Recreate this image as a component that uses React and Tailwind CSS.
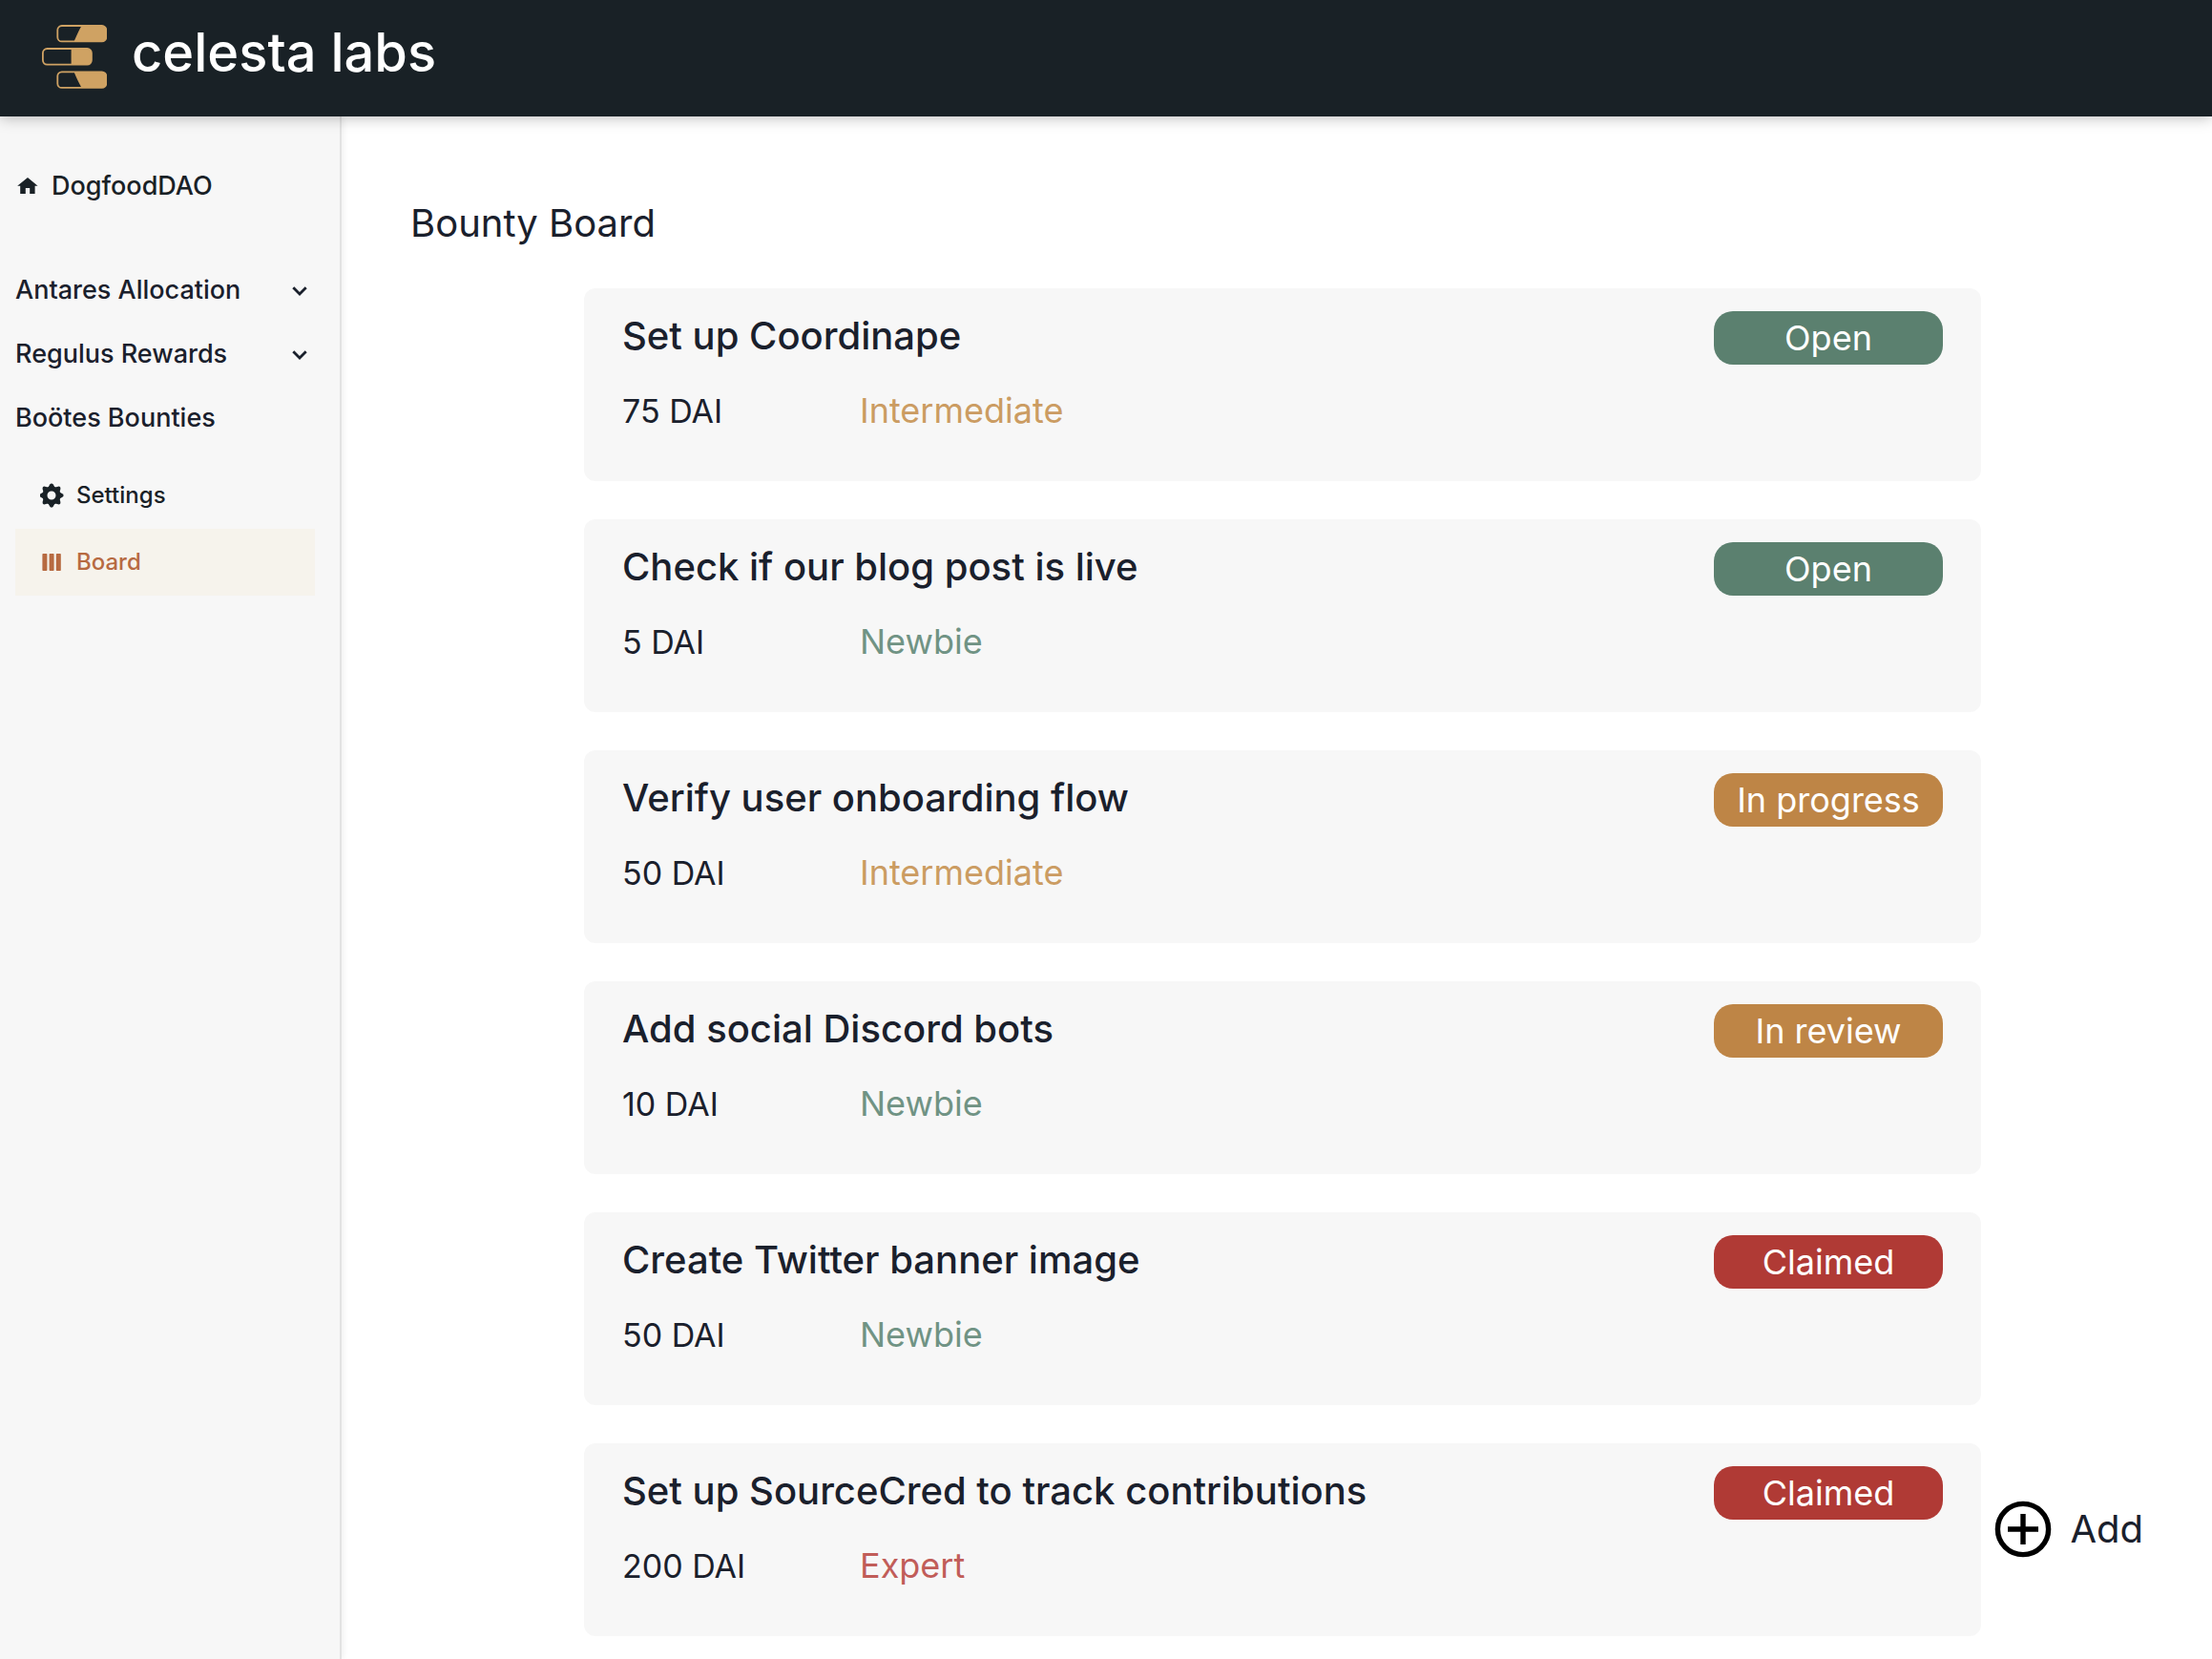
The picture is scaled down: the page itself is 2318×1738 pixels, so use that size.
import React from 'react';
import clsx from 'clsx';

const bounties = [
  { title: 'Set up Coordinape', reward: '75 DAI', level: 'Intermediate', status: 'Open' },
  { title: 'Check if our blog post is live', reward: '5 DAI', level: 'Newbie', status: 'Open' },
  { title: 'Verify user onboarding flow', reward: '50 DAI', level: 'Intermediate', status: 'In progress' },
  { title: 'Add social Discord bots', reward: '10 DAI', level: 'Newbie', status: 'In review' },
  { title: 'Create Twitter banner image', reward: '50 DAI', level: 'Newbie', status: 'Claimed' },
  { title: 'Set up SourceCred to track contributions', reward: '200 DAI', level: 'Expert', status: 'Claimed' },
];

const statusColors = {
  Open: 'bg-[#5b806f]',
  'In progress': 'bg-[#be8546]',
  'In review': 'bg-[#be8546]',
  Claimed: 'bg-[#b03a35]',
};

const levelColors = {
  Newbie: 'text-[#709384]',
  Intermediate: 'text-[#cb9c62]',
  Expert: 'text-[#c15d59]',
};

function Logo() {
  return (
    <svg width="68" height="72" viewBox="0 0 68 72" fill="none" stroke="#cfa263" strokeWidth="1.8">
      <rect x="16.3" y="3" width="51" height="16.4" rx="4.5" />
      <path d="M41.5 3H63a4.5 4.5 0 0 1 4.5 4.5v7.4a4.5 4.5 0 0 1-4.5 4.5H33.5C36 14 38 9 41.5 3Z" fill="#cfa263" stroke="none" />
      <rect x="0.9" y="27" width="51" height="16.6" rx="4.5" />
      <path d="M30.6 27H47.5a4.5 4.5 0 0 1 4.5 4.5v7.6a4.5 4.5 0 0 1-4.5 4.5H30.6Z" fill="#cfa263" stroke="none" />
      <rect x="16.3" y="51.3" width="51" height="16.6" rx="4.5" />
      <path d="M33.5 51.3H63a4.5 4.5 0 0 1 4.5 4.5v7.6a4.5 4.5 0 0 1-4.5 4.5H41.5C38 62 36 57 33.5 51.3Z" fill="#cfa263" stroke="none" />
    </svg>
  );
}

function HomeIcon() {
  return (
    <svg width="24" height="24" viewBox="0 0 24 24" fill="currentColor">
      <path d="M13 3 23.6 11.8H20.6V20H15.2V14H10.8V20H5.2V11.8H2.2Z" />
    </svg>
  );
}

function ChevronIcon() {
  return (
    <svg width="24" height="24" viewBox="0 0 24 24" fill="none" stroke="currentColor" strokeWidth="2.8">
      <path d="m5.3 8.2 6.7 6.7 6.7-6.7" />
    </svg>
  );
}

function GearIcon() {
  return (
    <svg width="26" height="26" viewBox="0 0 26 26" fill="currentColor">
      <circle cx="12" cy="13" r="7" fill="none" stroke="currentColor" strokeWidth="5" />
      {[0, 45, 90, 135, 180, 225, 270, 315].map((angle) => (
        <path
          key={angle}
          d="M8.2 5 10.2 1.6Q12 -0.8 13.8 1.6L15.8 5Z"
          transform={`rotate(${angle} 12 13)`}
        />
      ))}
    </svg>
  );
}

function BoardIcon() {
  return (
    <svg width="26" height="26" viewBox="0 0 26 26" fill="currentColor">
      <rect x="2.4" y="4" width="5" height="18" rx="0.8" />
      <rect x="9.6" y="4" width="5" height="18" rx="0.8" />
      <rect x="16.8" y="4" width="5" height="18" rx="0.8" />
    </svg>
  );
}

function PlusIcon() {
  return (
    <svg width="60" height="60" viewBox="0 0 60 60" fill="none" stroke="#000" strokeWidth="5.4">
      <circle cx="30" cy="30" r="26.6" />
      <path d="M30 14V46M14 30H46" />
    </svg>
  );
}

function SectionButton({ label }) {
  return (
    <button className="flex h-[67px] w-full items-center justify-between text-left">
      {label}
      <ChevronIcon />
    </button>
  );
}

function Sidebar() {
  return (
    <nav className="w-[358px] shrink-0 border-r-2 border-[#e3e3e3] bg-[#f7f7f7] pl-4 pr-[26px] pt-[46px] text-[27px] font-medium text-[#1a202c] shadow-[2px_0_6px_rgba(0,0,0,0.06)]">
      <a href="#home" className="flex h-[54px] items-center gap-[14px] text-[#192126]">
        <HomeIcon />
        DogfoodDAO
      </a>
      <div className="pr-1 pt-[49px]">
        <SectionButton label="Antares Allocation" />
        <SectionButton label="Regulus Rewards" />
        <button className="flex h-[67px] w-full items-center text-left">Boötes Bounties</button>
      </div>
      <div className="pt-3 text-[24px]">
        <a href="#settings" className="flex h-[70px] items-center gap-3 pl-[26px] text-[#192126]">
          <GearIcon />
          Settings
        </a>
        <a href="#board" className="flex h-[70px] items-center gap-3 bg-[#f6f3ec] pl-[26px] text-[#b76a41]">
          <BoardIcon />
          Board
        </a>
      </div>
    </nav>
  );
}

function BountyCard({ title, reward, level, status }) {
  return (
    <li className="h-[202px] rounded-xl bg-[#f7f7f7] px-10 pt-6">
      <div className="flex items-start justify-between">
        <h2 className="text-[40px] font-medium leading-[52px]">{title}</h2>
        <span
          className={clsx(
            'flex h-14 w-60 items-center justify-center rounded-[20px] text-[36px] text-white',
            statusColors[status]
          )}
        >
          {status}
        </span>
      </div>
      <div className="flex items-baseline pt-6 leading-[48px]">
        <span className="w-[249px] text-[34px]">{reward}</span>
        <span className={clsx('text-[36px]', levelColors[level])}>{level}</span>
      </div>
    </li>
  );
}

export default function App() {
  return (
    <div className="flex min-h-screen flex-col bg-white font-['Inter',sans-serif] text-[#1a202c]">
      <header className="relative z-10 flex h-[122px] gap-[26px] bg-[#192126] px-11 pt-6 shadow-[0_2px_14px_rgba(0,0,0,0.25)]">
        <Logo />
        <span className="text-[56px] font-medium leading-[62px] text-white">celesta labs</span>
      </header>

      <div className="flex flex-1">
        <Sidebar />
        <main className="flex-1 px-[72px] pb-6 pt-[84px]">
          <h1 className="text-[40px] leading-[56px]">Bounty Board</h1>
          <div className="flex items-end gap-[14px] pl-[182px] pt-10">
            <ul className="flex flex-1 flex-col gap-10">
              {bounties.map((bounty) => (
                <BountyCard key={bounty.title} {...bounty} />
              ))}
            </ul>
            <button className="mb-20 flex h-16 w-[156px] items-center justify-between text-[40px]">
              <PlusIcon />
              Add
            </button>
          </div>
        </main>
      </div>
    </div>
  );
}
